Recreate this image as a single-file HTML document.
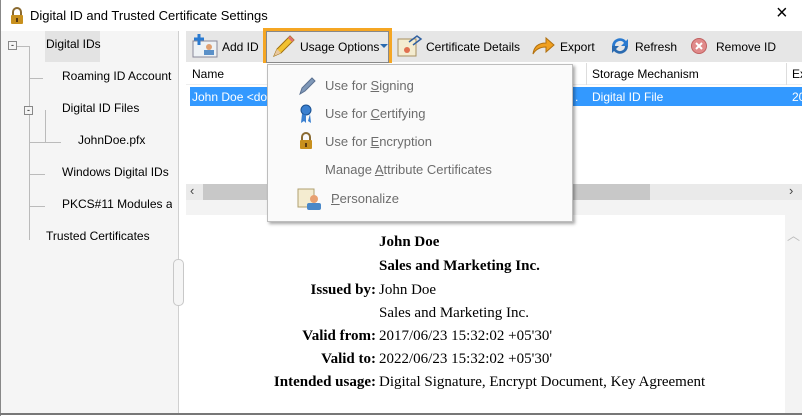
<!DOCTYPE html>
<html><head><style>
*{margin:0;padding:0;box-sizing:border-box}
body{width:802px;height:416px;overflow:hidden;background:#fff;font-family:"Liberation Sans",sans-serif;font-size:12px;color:#000;position:relative}
.a{position:absolute;white-space:nowrap}
.s{font-family:"Liberation Serif",serif;font-size:15px}
.b{font-weight:bold}
.r{right:426px;text-align:right}
.m{color:#6d6d6d;font-size:13px}
u{text-decoration:underline}
</style></head><body>
<div class="a" style="left:0;top:0;width:1px;height:416px;background:#888"></div>
<div class="a" style="left:0;top:413px;width:802px;height:2px;background:#777"></div>
<!-- title -->
<svg class="a" style="left:9px;top:7px" width="16" height="18"><path d="M4 8V5a4 4 0 0 1 8 0v3" fill="none" stroke="#8a6a30" stroke-width="2"/><rect x="2" y="8" width="12" height="9" rx="1" fill="#c8901e"/><rect x="7" y="11" width="2" height="4" fill="#5a3a10"/></svg>
<div class="a" style="left:30px;top:8px;font-size:13px">Digital ID and Trusted Certificate Settings</div>
<div class="a" style="left:776px;top:2px;font-size:20px;font-weight:300">×</div>
<!-- left panel -->
<div class="a" style="left:1px;top:31px;width:177px;height:382px;background:#f5f5f5"></div>
<div class="a" style="left:178px;top:31px;width:1px;height:382px;background:#d0d0d0"></div>
<div class="a" style="left:173px;top:259px;width:11px;height:47px;border:1px solid #c8c8c8;border-radius:5px;background:#f5f5f5"></div>
<div class="a" style="left:45px;top:31px;width:55px;height:31px;background:#e3e3e3"></div>
<div class="a" style="left:8px;top:41px;width:9px;height:9px;border:1px solid #888;font-size:9px;line-height:6px;text-align:center">-</div>
<div class="a" style="left:17px;top:46px;width:12px;height:1px;background:#bbb"></div>
<div class="a" style="left:29px;top:46px;width:1px;height:194px;background:#bbb"></div>
<div class="a" style="left:29px;top:78px;width:14px;height:1px;background:#bbb"></div>
<div class="a" style="left:29px;top:142px;width:16px;height:1px;background:#bbb"></div>
<div class="a" style="left:29px;top:174px;width:16px;height:1px;background:#bbb"></div>
<div class="a" style="left:29px;top:206px;width:16px;height:1px;background:#bbb"></div>
<div class="a" style="left:24px;top:106px;width:9px;height:9px;border:1px solid #888;background:#f5f5f5;font-size:9px;line-height:6px;text-align:center">-</div>
<div class="a" style="left:45px;top:110px;width:1px;height:32px;background:#bbb"></div>
<div class="a" style="left:45px;top:142px;width:16px;height:1px;background:#bbb"></div>
<div class="a" style="left:46px;top:37px">Digital IDs</div>
<div class="a" style="left:62px;top:69px">Roaming ID Account</div>
<div class="a" style="left:62px;top:101px">Digital ID Files</div>
<div class="a" style="left:78px;top:133px">JohnDoe.pfx</div>
<div class="a" style="left:62px;top:165px">Windows Digital IDs</div>
<div class="a" style="left:62px;top:197px;width:110px;overflow:hidden">PKCS#11 Modules and Tokens</div>
<div class="a" style="left:46px;top:229px">Trusted Certificates</div>
<!-- toolbar -->
<div class="a" style="left:186px;top:31px;width:616px;height:31px;background:#e6e6e6"></div>
<svg class="a" style="left:191px;top:33px" width="28" height="26"><rect x="2" y="8" width="24" height="16" fill="#eef2f5" stroke="#889"/><circle cx="18" cy="14" r="3" fill="#e0a070"/><rect x="13" y="17" width="10" height="5" fill="#5a90c8"/><path d="M8 1v11M3 6h10" stroke="#2a7ad0" stroke-width="3"/></svg>
<div class="a" style="left:222px;top:40px">Add ID</div>
<div class="a" style="left:263px;top:28px;width:129px;height:38px;border:3px solid #f5a623;background:#e8e8e8;box-shadow:inset 0 0 0 1px #888"></div>
<svg class="a" style="left:271px;top:35px" width="24" height="24"><path d="M3 21l3-7 13-13 4 4-13 13z" fill="#f2c230" stroke="#a07010"/><path d="M3 21l3-7 4 4z" fill="#e8c8a0"/><path d="M19 1l4 4-2 2-4-4z" fill="#e07070"/></svg>
<div class="a" style="left:300px;top:40px">Usage Options</div>
<div class="a" style="left:380px;top:44px;border:4px solid transparent;border-top:4px solid #2a6ab0"></div>
<svg class="a" style="left:397px;top:34px" width="26" height="24"><rect x="1" y="5" width="18" height="17" fill="#f4ecd0" stroke="#a89060"/><circle cx="10" cy="16" r="3" fill="#e07050"/><path d="M12 8l8-6 4 3-8 6" fill="none" stroke="#3060a0" stroke-width="1.5"/></svg>
<div class="a" style="left:426px;top:40px">Certificate Details</div>
<svg class="a" style="left:531px;top:36px" width="24" height="20"><path d="M2 18C3 10 8 7 15 7V2l8 7-8 7v-5C9 11 5 13 2 18z" fill="#f0a020" stroke="#b07010"/></svg>
<div class="a" style="left:560px;top:40px">Export</div>
<svg class="a" style="left:608px;top:34px" width="24" height="24"><path d="M4 12a8 8 0 0 1 14-5l2-2v7h-7l3-3a5 5 0 0 0-9 3z" fill="#2a7ad0"/><path d="M20 12a8 8 0 0 1-14 5l-2 2v-7h7l-3 3a5 5 0 0 0 9-3z" fill="#2a6ab0"/></svg>
<div class="a" style="left:635px;top:40px">Refresh</div>
<svg class="a" style="left:690px;top:37px" width="18" height="18"><circle cx="9" cy="9" r="7.5" fill="#e08a8a" stroke="#c06060"/><path d="M6 6l6 6M12 6l-6 6" stroke="#fff" stroke-width="2"/></svg>
<div class="a" style="left:716px;top:40px">Remove ID</div>
<!-- list -->
<div class="a" style="left:186px;top:63px;width:616px;height:22px;background:#fff;border-bottom:1px solid #eee"></div>
<div class="a" style="left:586px;top:63px;width:1px;height:22px;background:#ddd"></div>
<div class="a" style="left:786px;top:63px;width:1px;height:22px;background:#ddd"></div>
<div class="a" style="left:192px;top:67px">Name</div>
<div class="a" style="left:592px;top:67px">Storage Mechanism</div>
<div class="a" style="left:792px;top:67px">Ex</div>
<div class="a" style="left:190px;top:87px;width:612px;height:19px;background:#3399ff"></div>
<div class="a" style="left:192px;top:90px;color:#fff">John Doe &lt;do</div>
<div class="a" style="left:575px;top:90px;color:#fff">.</div>
<div class="a" style="left:592px;top:90px;color:#fff">Digital ID File</div>
<div class="a" style="left:792px;top:90px;color:#fff">20</div>
<!-- h scroll -->
<div class="a" style="left:186px;top:184px;width:616px;height:16px;background:#eaeaea"></div>
<div class="a" style="left:203px;top:184px;width:447px;height:16px;background:#c8c8c8"></div>
<div class="a" style="left:190px;top:183px;font-size:13px;color:#444">‹</div>
<div class="a" style="left:789px;top:183px;font-size:13px;color:#444">›</div>
<div class="a" style="left:186px;top:200px;width:616px;height:15px;background:#f3f3f3"></div>
<div class="a" style="left:785px;top:215px;width:17px;height:198px;background:#f3f3f3"></div>
<div class="a" style="left:787px;top:225px;font-size:13px;color:#bbb">︿</div>
<!-- details -->
<div class="a s b" style="left:379px;top:234px">John Doe</div>
<div class="a s b" style="left:379px;top:258px">Sales and Marketing Inc.</div>
<div class="a s b r" style="top:282px">Issued by:</div>
<div class="a s" style="left:379px;top:282px">John Doe</div>
<div class="a s" style="left:379px;top:305px">Sales and Marketing Inc.</div>
<div class="a s b r" style="top:328px">Valid from:</div>
<div class="a s" style="left:379px;top:328px">2017/06/23 15:32:02 +05'30'</div>
<div class="a s b r" style="top:351px">Valid to:</div>
<div class="a s" style="left:379px;top:351px">2022/06/23 15:32:02 +05'30'</div>
<div class="a s b r" style="top:374px">Intended usage:</div>
<div class="a s" style="left:379px;top:374px">Digital Signature, Encrypt Document, Key Agreement</div>
<!-- menu -->
<div class="a" style="left:267px;top:64px;width:306px;height:158px;background:#fafafa;border:1px solid #bdbdbd;box-shadow:2px 2px 3px rgba(0,0,0,.35)"></div>
<svg class="a" style="left:297px;top:76px" width="20" height="20"><path d="M3 18l2-6 10-10 3 3-10 10z" fill="#7f98b8" stroke="#5a7090"/></svg>
<div class="a m" style="left:325px;top:78px">Use for <u>S</u>igning</div>
<svg class="a" style="left:299px;top:104px" width="14" height="20"><circle cx="7" cy="6" r="5" fill="#3a80d0" stroke="#1a5090"/><path d="M3 10l-1 9 3-2 2 2 0-8M11 10l1 9-3-2" fill="#3a80d0"/></svg>
<div class="a m" style="left:325px;top:106px">Use for <u>C</u>ertifying</div>
<svg class="a" style="left:298px;top:132px" width="16" height="18"><path d="M4 8V5a4 4 0 0 1 8 0v3" fill="none" stroke="#8a6a30" stroke-width="2"/><rect x="2" y="8" width="12" height="9" rx="1" fill="#c8901e"/><rect x="7" y="11" width="2" height="4" fill="#5a3a10"/></svg>
<div class="a m" style="left:325px;top:134px">Use for <u>E</u>ncryption</div>
<div class="a m" style="left:325px;top:162px">Manage <u>A</u>ttribute Certificates</div>
<svg class="a" style="left:297px;top:187px" width="26" height="24"><rect x="1" y="2" width="16" height="18" fill="#f4ecd0" stroke="#b0a070"/><circle cx="17" cy="12" r="4" fill="#e8a070"/><rect x="10" y="16" width="14" height="7" rx="2" fill="#4a88c8"/></svg>
<div class="a m" style="left:331px;top:191px"><u>P</u>ersonalize</div>
</body></html>
